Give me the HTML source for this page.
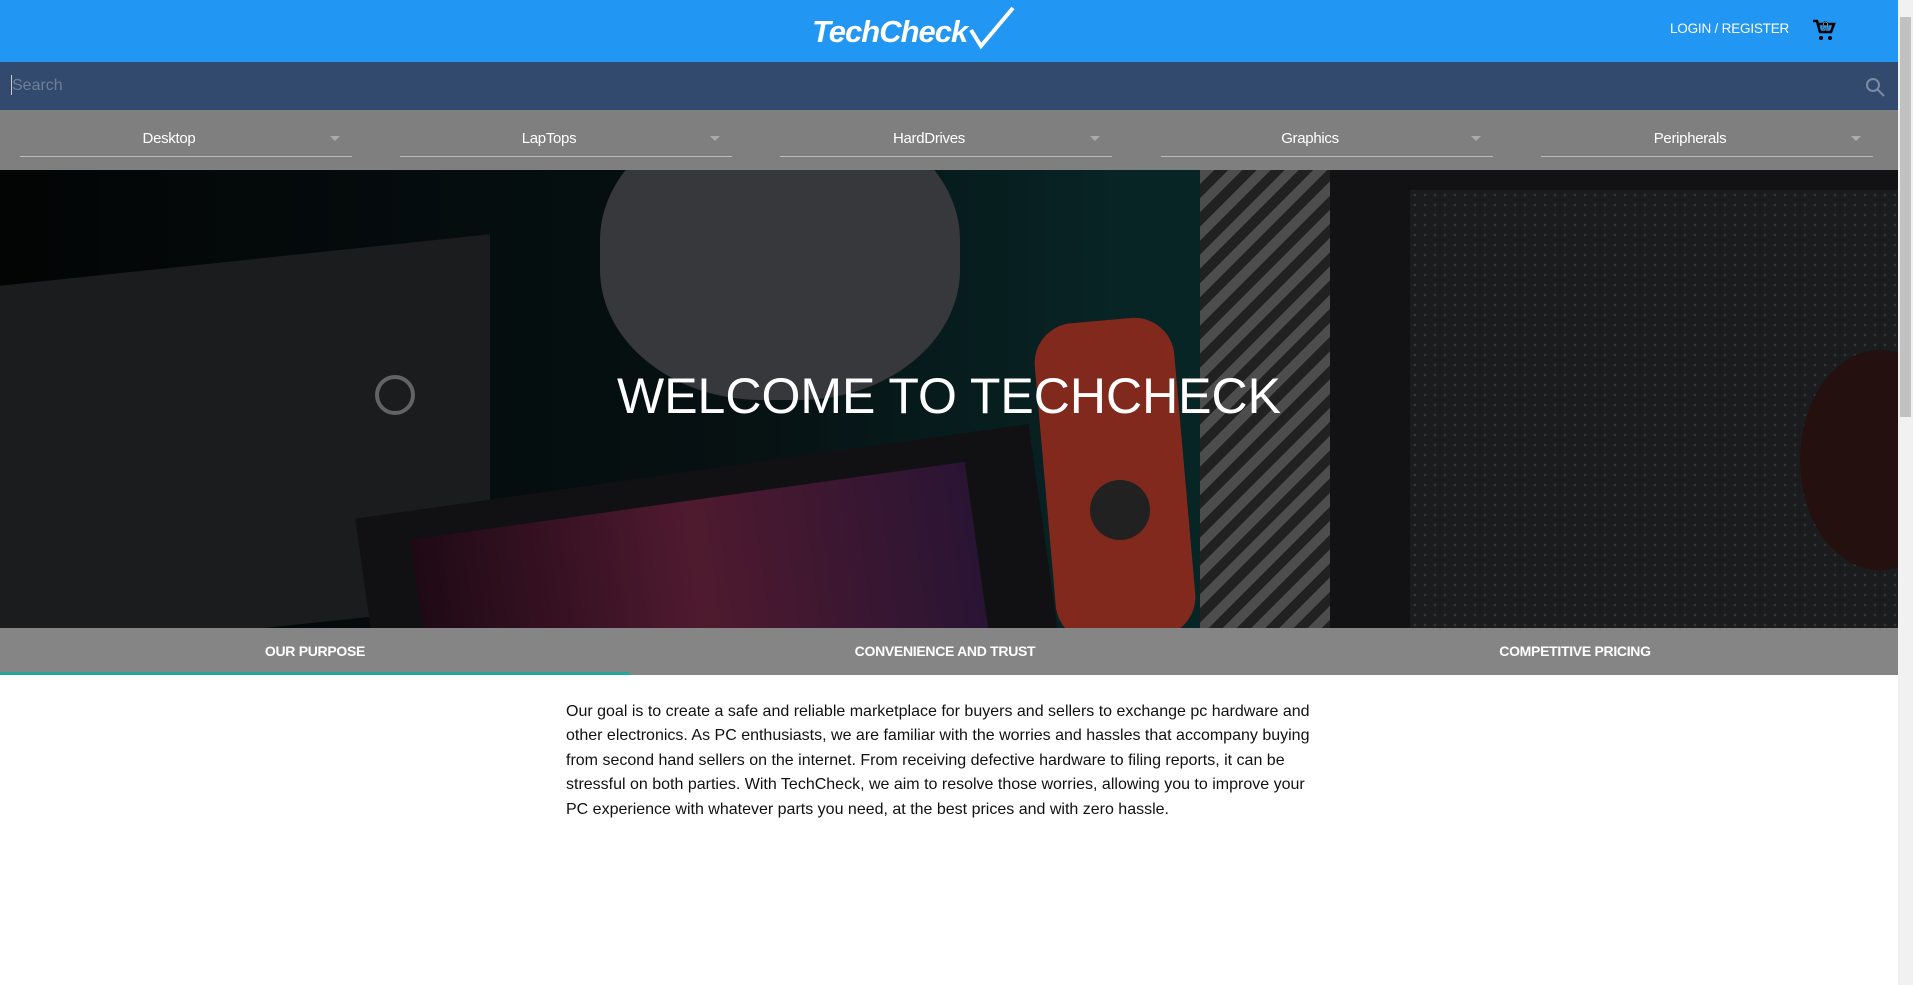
<!DOCTYPE html>
<html><head><meta charset="utf-8"><style>
*{margin:0;padding:0;box-sizing:border-box}
body{width:1913px;height:985px;overflow:hidden;background:#fff;font-family:"Liberation Sans",Arial,sans-serif;position:relative}
.hdr{position:absolute;left:0;top:0;width:1898px;height:62px;background:#2196f3}
.logo{position:absolute;left:812px;top:14px;color:#fff;font-style:italic;font-weight:bold;font-size:31px;letter-spacing:-1px;width:200px;height:40px}
.login{position:absolute;left:1670px;top:21px;color:#fff;font-size:13.5px;letter-spacing:-.2px}
.search{position:absolute;left:0;top:62px;width:1898px;height:48px;background:#324a6d}
.search span{position:absolute;left:12px;top:15px;color:#6f7f99;font-size:16px}
.search .caret{position:absolute;left:11px;top:13px;width:1px;height:20px;background:#ccc}
.nav{position:absolute;left:0;top:110px;width:1898px;height:60px;background:#7f7f7f}
.sel{position:absolute;top:0;width:332px;height:47px;border-bottom:1px solid #bbb;color:#fff;font-size:15px;text-align:center;line-height:58px;padding-right:34px;letter-spacing:-.3px}
.sel:after{content:"";position:absolute;right:12px;top:26px;border:5px solid transparent;border-top-color:#aaa}
.hero{position:absolute;left:0;top:170px;width:1898px;height:458px;background:linear-gradient(90deg,#050808,#0b1c1e 40%,#0d3a3b 60%,#102a2b);overflow:hidden}
.hero div{position:absolute}
.ov{left:0;top:0;width:100%;height:100%;background:rgba(0,0,0,.35)}
.title{position:absolute;left:0;top:367px;width:1898px;text-align:center;color:#fff;font-size:50px}
.tabs{position:absolute;left:0;top:628px;width:1898px;height:47px;background:#858585}
.tab{position:absolute;top:0;width:630px;text-align:center;color:#fff;font-size:14px;line-height:47px;font-weight:bold;letter-spacing:-.3px}
.ind{position:absolute;left:0;top:672px;width:630px;height:3px;background:#26a69a}
p{position:absolute;left:566px;top:700px;width:760px;font-size:16px;line-height:24.4px;color:#111}
.sb{position:absolute;left:1898px;top:0;width:15px;height:985px;background:#f1f1f1}
.sb i{position:absolute;left:2px;top:17px;width:11px;height:400px;background:#c1c1c1}
</style></head><body>
<div class="hdr"><div class="logo">TechCheck<svg width="48" height="44" viewBox="0 0 48 44" style="position:absolute;left:156px;top:-8px"><path d="M3 24 L13 40 L45 2" stroke="#fff" stroke-width="4" fill="none"/></svg></div>
<div class="login">LOGIN / REGISTER</div>
<svg style="position:absolute;left:1812px;top:18px" width="24" height="24" viewBox="0 0 24 24"><path d="M1 3h4l3 11h11l3-8H7" stroke="#000" stroke-width="2.5" fill="none"/><circle cx="9" cy="20" r="2"/><circle cx="18" cy="20" r="2"/><text x="10" y="12" font-size="12" font-family="Liberation Sans" fill="#fff" stroke="#000" stroke-width=".5">0</text></svg>
</div>
<div class="search"><div class="caret"></div><span>Search</span>
<svg style="position:absolute;left:1864px;top:14px" width="22" height="22" viewBox="0 0 22 22"><circle cx="9" cy="9" r="6" stroke="#7d8aa0" stroke-width="2" fill="none"/><path d="M13 13l7 7" stroke="#7d8aa0" stroke-width="2"/></svg></div>
<div class="nav">
<div class="sel" style="left:20px">Desktop</div>
<div class="sel" style="left:400px">LapTops</div>
<div class="sel" style="left:780px">HardDrives</div>
<div class="sel" style="left:1161px">Graphics</div>
<div class="sel" style="left:1541px">Peripherals</div>
</div>
<div class="hero">
<div style="left:0;top:90px;width:490px;height:370px;background:#2a2b2e;transform:skewY(-6deg)"></div>
<div style="left:375px;top:205px;width:40px;height:40px;border-radius:50%;border:4px solid #999"></div>
<div style="left:600px;top:-60px;width:360px;height:290px;border-radius:45%;background:#55575c"></div>
<div style="left:1045px;top:150px;width:140px;height:320px;border-radius:40px;background:#c8402e;transform:rotate(-5deg)"></div>
<div style="left:1090px;top:310px;width:60px;height:60px;border-radius:50%;background:#333"></div>
<div style="left:370px;top:300px;width:680px;height:260px;background:#1b1b1e;transform:rotate(-8deg)"></div>
<div style="left:420px;top:330px;width:560px;height:180px;background:linear-gradient(90deg,#301020,#7a2848,#402050);transform:rotate(-8deg)"></div>
<div style="left:1200px;top:0;width:140px;height:458px;background:repeating-linear-gradient(135deg,#777 0 10px,#333 10px 20px)"></div>
<div style="left:1330px;top:0;width:568px;height:458px;background:#1c1d20"></div>
<div style="left:1410px;top:20px;width:490px;height:440px;background:radial-gradient(#555 1px,transparent 1.5px) 0 0/10px 10px,#2a2b2e"></div>
<div style="left:1800px;top:180px;width:160px;height:220px;border-radius:50%;background:#3a1a1a"></div>
<div class="ov"></div>
</div>
<div class="title">WELCOME TO TECHCHECK</div>
<div class="tabs">
<div class="tab" style="left:0">OUR PURPOSE</div>
<div class="tab" style="left:630px">CONVENIENCE AND TRUST</div>
<div class="tab" style="left:1260px">COMPETITIVE PRICING</div>
</div>
<div class="ind"></div>
<p>Our goal is to create a safe and reliable marketplace for buyers and sellers to exchange pc hardware and other electronics. As PC enthusiasts, we are familiar with the worries and hassles that accompany buying from second hand sellers on the internet. From receiving defective hardware to filing reports, it can be stressful on both parties. With TechCheck, we aim to resolve those worries, allowing you to improve your PC experience with whatever parts you need, at the best prices and with zero hassle.</p>
<div class="sb"><i></i></div>
</body></html>
